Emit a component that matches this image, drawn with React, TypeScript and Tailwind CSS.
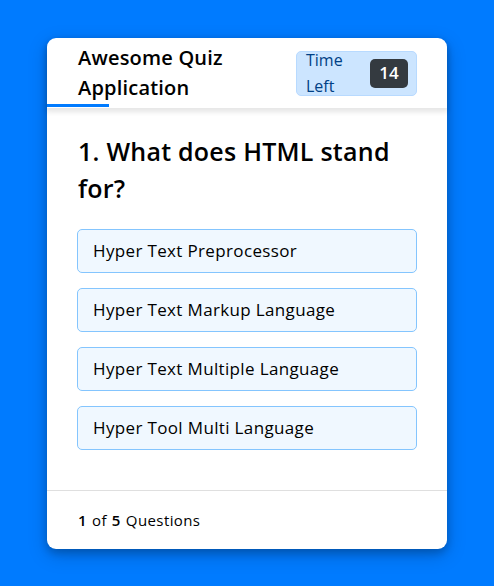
import React from "react";

const options = [
  "Hyper Text Preprocessor",
  "Hyper Text Markup Language",
  "Hyper Text Multiple Language",
  "Hyper Tool Multi Language",
];

export default function App() {
  return (
    <div
      className="min-h-screen bg-[#007bff] flex justify-center pt-[38px]"
      style={{ fontFamily: "'Open Sans', 'Noto Sans', sans-serif" }}
    >
      <div className="w-[400px] h-[511px] bg-white rounded-[9px] shadow-[0_4px_8px_0_rgba(0,0,0,0.2),0_6px_20px_0_rgba(0,0,0,0.19)] flex flex-col">
        <header className="relative h-[70px] shrink-0 px-[30px] flex items-center justify-between rounded-t-[9px] shadow-[0px_3px_5px_1px_rgba(0,0,0,0.1)]">
          <div className="w-[190px] pl-[1px] text-[20px] font-semibold leading-[30px] tracking-[0.2px] text-black">
            Awesome Quiz Application
          </div>
          <div className="w-[121px] h-[45px] bg-[#cce5ff] border border-[#b8daff] rounded-[5px] flex items-center justify-between pl-[9px] pr-[8px]">
            <div className="w-[50px] text-[16px] leading-[26px] text-[#004085]">Time Left</div>
            <div className="w-[38px] h-[29px] bg-[#343a40] rounded-[5px] text-white text-[17px] font-semibold flex items-center justify-center">
              14
            </div>
          </div>
          <div className="absolute left-0 bottom-[1px] h-[3px] w-[62px] bg-[#007bff]" />
        </header>
        <section className="px-[30px] pt-[25px] pb-[40px]">
          <div className="pl-[1px] text-[25px] font-semibold leading-[37px] tracking-[0.25px] text-black">
            1. What does HTML stand for?
          </div>
          <div className="mt-[22px] flex flex-col gap-[15px]">
            {options.map((o) => (
              <div
                key={o}
                className="h-[44px] bg-[#f0f8ff] border border-[#84c5fe] rounded-[5px] flex items-center pl-[15px] text-[17px] tracking-[0.35px] text-black"
              >
                {o}
              </div>
            ))}
          </div>
        </section>
        <footer className="flex-1 border-t border-[#dfdfdf] flex items-center px-[31px] text-[15px] tracking-[0.4px] text-black">
          <span className="font-semibold">1</span>
          <span className="mx-[5px]">of</span>
          <span className="font-semibold">5</span>
          <span className="ml-[5px]">Questions</span>
        </footer>
      </div>
    </div>
  );
}
